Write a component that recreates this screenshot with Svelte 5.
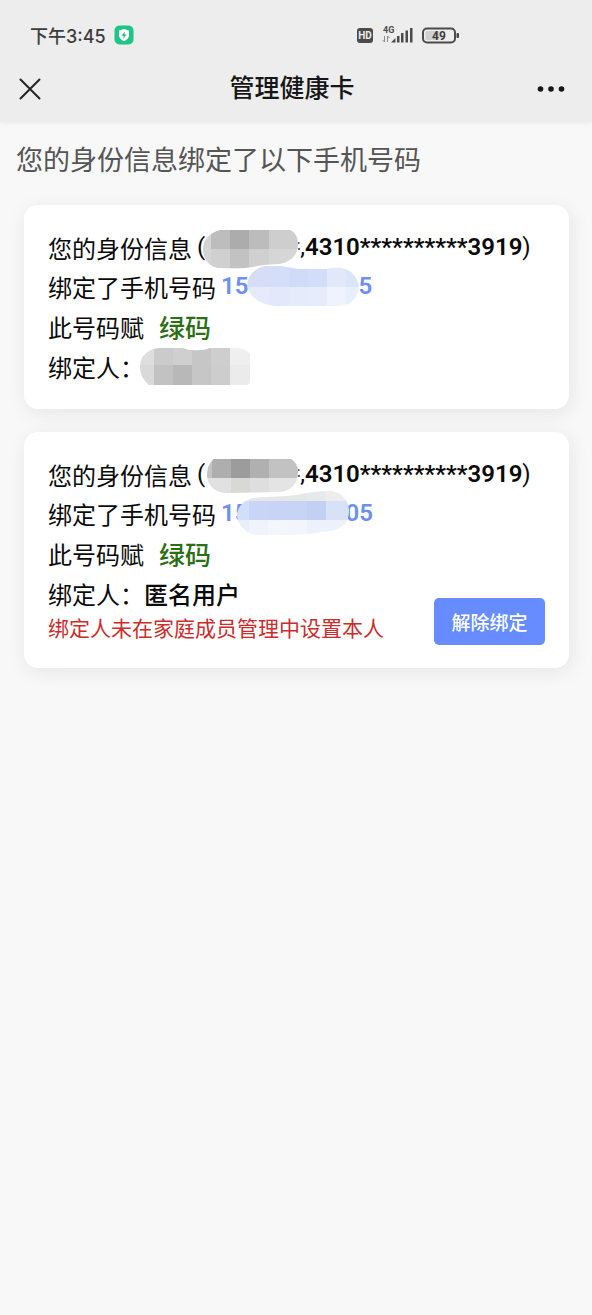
<script>
  // Each mosaic covers a hidden value: an outline plus the tinted cells inside it.
  const masks = {
    nameA: {
      w: 95, h: 40,
      shape: 'M17 1H87C92 3 95 8 95 15C95 27 87 33 76 35C62 36 58 36 50 38C40 40 24 39 15 39C7 38 0 31 0 20C0 10 7 4 17 1Z',
      xs: [0, 8, 27, 46, 66, 95], ys: [0, 20, 40],
      fills: [['#d4d4d4', '#bdbdbd', '#acacac', '#bcbcbc', '#cecece'], ['#d5d5d5', '#d0d0d0', '#c2c2c2', '#d0d0d0', '#d6d6d6']]
    },
    nameB: {
      w: 91, h: 40,
      shape: 'M7 3H84C89 6 91 11 91 16C91 29 83 35 72 36L20 37C9 37 0 30 0 19C0 11 3 6 7 3Z',
      xs: [0, 5, 24, 43, 62, 91], ys: [0, 22, 40],
      fills: [['#c4c4c4', '#aeaeae', '#9c9c9c', '#b0b0b0', '#c2c2c2'], ['#e2e2e2', '#e1e1e1', '#d8d8d5', '#dedede', '#e4e4e4']]
    },
    phoneA: {
      w: 112, h: 40,
      shape: 'M18 0H34C42 1 48 3 56 3H80C88 1 100 1 106 8C113 15 114 25 107 33C103 38 98 40 91 40H28C14 38 5 33 1 23C-2 12 7 2 18 0Z',
      xs: [0, 3, 22, 42, 61, 80, 99, 112], ys: [0, 21, 40],
      fills: [['#d7def6', '#d5ddf7', '#d5def8', '#d0dbf8', '#d2ddf9', '#e1e8fa', '#dae4fb'], ['#e1e7fa', '#e5ebfb', '#e3e9fb', '#e5ebfb', '#e6ecfc', '#eff3fd', '#e7eefc']]
    },
    phoneB: {
      w: 112, h: 44,
      shape: 'M16 7C32 5 47 6 60 4C73 1 82 0 94 0C105 1 112 10 112 20C112 31 105 38 94 40C80 41 70 44 55 44H18C8 41 1 34 0 25C0 16 7 9 16 7Z',
      xs: [0, 12, 31, 50, 70, 89, 112], ys: [0, 10, 29, 44],
      fills: [['#e9ebef', '#e5e7ea', '#e4e6ea', '#e6e7e9', '#e8e9ea', '#ededed'], ['#d3def8', '#c8d5f6', '#c7d4f5', '#c6d4f6', '#c2d0f4', '#d8e2f6'], ['#e9eefc', '#f0f3fd', '#f4f6fe', '#f3f5fd', '#edf1fd', '#edf1fc']]
    },
    binder: {
      w: 110, h: 37,
      shape: 'M18 0H43C48 3 64 3 70 0H98C105 1 108 3 110 6V34L108 37H9C3 32 0 26 0 18C0 9 8 1 18 0Z',
      xs: [0, 14, 33, 52, 71, 90, 110], ys: [0, 17, 37],
      fills: [['#dedede', '#cbcbcb', '#cfcfcf', '#c6c6c6', '#cecece', '#efefef'], ['#d9d9d9', '#c2c2c2', '#b8b8b8', '#c6c6c6', '#cdcdcd', '#ebebeb']]
    }
  };

  const cards = [
    { id: 'a', name: 'nameA', phone: 'phoneA', head: '15', tail: '5', user: null },
    { id: 'b', name: 'nameB', phone: 'phoneB', head: '15', tail: '05', user: '匿名用户', note: '绑定人未在家庭成员管理中设置本人' }
  ];
</script>

{#snippet mosaic(key, id)}
  {@const m = masks[key]}
  <svg class="mosaic {key}" width={m.w} height={m.h} viewBox="0 0 {m.w} {m.h}" aria-hidden="true">
    <clipPath id="{id}-{key}"><path d={m.shape} /></clipPath>
    <g clip-path="url(#{id}-{key})" shape-rendering="crispEdges">
      {#each m.fills as row, r}
        {#each row as fill, c}
          <rect x={m.xs[c]} y={m.ys[r]} width={m.xs[c + 1] - m.xs[c]} height={m.ys[r + 1] - m.ys[r]} {fill} />
        {/each}
      {/each}
    </g>
  </svg>
{/snippet}

<header>
  <div class="status">
    <span class="clock">下午3:45</span>
    <svg class="shield" width="20" height="20" viewBox="0 0 20 20" aria-hidden="true">
      <rect x="0.5" y="0.5" width="19" height="19" rx="5" fill="#1fc588" />
      <path d="M10 4L15 5.6V10.3C15 13.2 12.7 15 10 16.2C7.300 15 5 13.200 5 10.300V5.600Z" fill="#fff" />
      <path d="M10.800 6.500L7.700 10.700H9.700L9.300 13.700L12.400 9.400H10.400Z" fill="#1fb57e" />
    </svg>
    <svg class="signals" width="104" height="22" viewBox="0 0 104 22" aria-hidden="true">
      <rect x="0" y="4" width="16" height="15" rx="3" fill="#4b4b4b" />
      <text x="8" y="15" text-anchor="middle" font-size="10" font-weight="700" fill="#ededed">HD</text>
      <text x="26" y="9" font-size="9" font-weight="700" fill="#4b4b4b">4G</text>
      <g stroke="#8a8a8a" fill="none" stroke-width="1">
        <path d="M27.500 12V18L25.500 16M30.500 18V12L32.500 14" />
      </g>
      <g fill="#4b4b4b">
        <path d="M34 18.500L38.500 14V18.500Z" />
        <rect x="40" y="12" width="2.500" height="6.500" />
        <rect x="44" y="9" width="2.500" height="9.500" />
        <rect x="48.500" y="6.500" width="2.500" height="12" />
        <rect x="53" y="4" width="2.500" height="14.500" />
      </g>
      <rect x="66" y="4.500" width="32" height="14" rx="4" fill="none" stroke="#4b4b4b" stroke-width="2" />
      <rect x="68.500" y="7" width="14" height="9" rx="1.500" fill="#d0d0d0" />
      <rect x="99.500" y="9" width="2.500" height="5" rx="1" fill="#4b4b4b" />
      <text x="82" y="15.500" text-anchor="middle" font-size="12" font-weight="700" fill="#3d3d3d">49</text>
    </svg>
  </div>
  <nav>
    <button class="icon" aria-label="关闭">
      <svg width="22" height="22" viewBox="0 0 22 22"><path d="M1.500 1.500L20.500 20.500M20.500 1.500L1.500 20.500" stroke="#242424" stroke-width="2" stroke-linecap="round" /></svg>
    </button>
    <h1>管理健康卡</h1>
    <button class="icon more" aria-label="更多">
      <svg width="28" height="8" viewBox="0 0 28 8" fill="#161616"><circle cx="3.500" cy="4" r="2.800" /><circle cx="14" cy="4" r="2.800" /><circle cx="24.500" cy="4" r="2.800" /></svg>
    </button>
  </nav>
</header>

<main>
  <h2>您的身份信息绑定了以下手机号码</h2>
  {#each cards as card (card.id)}
    <section>
      <p class="line first">
        <span>您的身份信息</span>
        <span class="value">({@render mosaic(card.name, card.id)}<svg class="trace" width="2" height="20" viewBox="0 0 2 20" aria-hidden="true"><path d="M0 6H1.500M0 12H2" stroke="#333" stroke-width="1.500" /></svg>,<b>4310**********3919</b>)</span>
      </p>
      <p class="line">
        <span>绑定了手机号码</span>
        <b class="value phone">{card.head}{@render mosaic(card.phone, card.id)}{card.tail}</b>
      </p>
      <p class="line">此号码赋<strong class="green">绿码</strong></p>
      <div class="foot">
        <div class="binder-info">
          <p class="line">
            绑定人：
            {#if card.user}
              <b class="user">{card.user}</b>
            {:else}
              {@render mosaic('binder', card.id)}
            {/if}
          </p>
          {#if card.note}<p class="note">{card.note}</p>{/if}
        </div>
        {#if card.note}<button class="unbind">解除绑定</button>{/if}
      </div>
    </section>
  {/each}
</main>

<style>
  :global(body) {
    background: #f8f8f8;
    color: #0a0a0a;
    font-family: Roboto, "Noto Sans CJK SC", sans-serif;
  }
  h1, h2, p { margin: 0; }
  button { border: 0; padding: 0; font: inherit; cursor: pointer; }
  svg { display: block; flex: none; }
  header {
    background: #ededed;
    box-shadow: 0 1px 4px rgba(0, 0, 0, 0.06);
  }
  .status {
    display: flex;
    align-items: center;
    height: 42px;
    padding: 14px 131px 0 30px;
  }
  .clock {
    font-family: Inter, "Noto Sans CJK SC", sans-serif;
    font-size: 18px;
    font-weight: 500;
    color: #3d3d3d;
  }
  .shield { margin-left: 8px; }
  .signals { margin-left: auto; }
  nav {
    display: grid;
    grid-template-columns: 1fr auto 1fr;
    align-items: center;
    height: 66px;
    padding: 0 27px 0 19px;
  }
  .icon { display: flex; justify-self: start; background: none; }
  .more { justify-self: end; }
  h1 { font-size: 25px; font-weight: 500; line-height: 36px; color: #161616; }
  main {
    display: flex;
    flex-direction: column;
    gap: 23px;
    padding: 18px 23px 24px 24px;
  }
  h2 {
    margin-left: -8px;
    font-size: 27px;
    font-weight: 400;
    line-height: 42px;
    color: #555;
  }
  section {
    padding: 23px 24px;
    border-radius: 14px;
    background: #fff;
    box-shadow: 2px 4px 20px rgba(0, 0, 0, 0.08);
  }
  .line {
    display: flex;
    align-items: center;
    height: 40px;
    font-size: 24px;
    white-space: nowrap;
  }
  .first { height: 38px; }
  .value { display: flex; align-items: center; margin-left: 5px; }
  b { font-weight: 600; }
  .mosaic { position: relative; }
  .nameA, .nameB { margin-top: 4px; }
  .nameA { margin-left: -2px; }
  .nameB { margin-left: 2px; }
  .phone { color: #6c8ff0; }
  .phoneA { margin: 0 -1px; }
  .phoneB { margin: 0 -4px 0 -11px; }
  .binder { margin-left: -4px; }
  .green { margin-left: 15px; font-size: 26px; font-weight: 500; color: #2b6f14; }
  .user { font-weight: 500; }
  .foot { display: flex; justify-content: space-between; align-items: flex-end; }
  .note { font-size: 21px; line-height: 32px; color: #cb2c2c; white-space: nowrap; }
  .unbind {
    flex: none;
    width: 111px;
    height: 47px;
    border-radius: 5px;
    background: #668cff;
    color: #fff;
    font-size: 19px;
    font-weight: 500;
  }
</style>
